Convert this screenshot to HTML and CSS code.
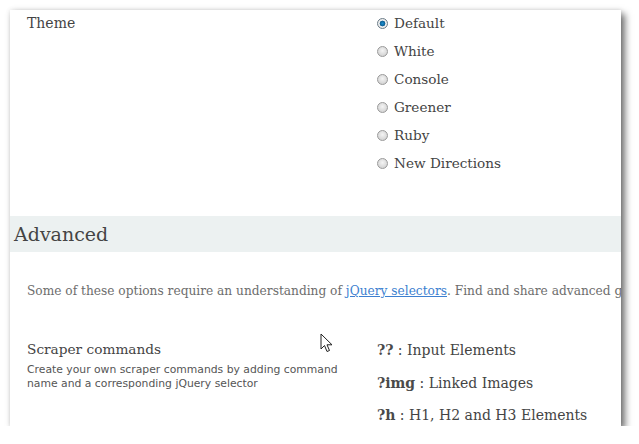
FILE: index.html
```html
<!DOCTYPE html>
<html>
<head>
<meta charset="utf-8">
<link rel="stylesheet" href="styles.css">
</head>
<body>
<div class="panel">
  <div class="row theme-row">
    <div class="label">Theme</div>
    <div class="options">
      <label class="opt"><span class="radio checked"></span>Default</label>
      <label class="opt"><span class="radio"></span>White</label>
      <label class="opt"><span class="radio"></span>Console</label>
      <label class="opt"><span class="radio"></span>Greener</label>
      <label class="opt"><span class="radio"></span>Ruby</label>
      <label class="opt"><span class="radio"></span>New Directions</label>
    </div>
  </div>
  <h2 class="band">Advanced</h2>
  <p class="intro">Some of these options require an understanding of <a href="#">jQuery selectors</a>. Find and share advanced global commands</p>
  <div class="row cmd-row">
    <div class="label">
      <div class="title">Scraper commands</div>
      <div class="desc">Create your own scraper commands by adding command name and a corresponding jQuery selector</div>
    </div>
    <div class="cmds">
      <div class="cmd"><b>??</b> : Input Elements</div>
      <div class="cmd"><b>?img</b> : Linked Images</div>
      <div class="cmd"><b>?h</b> : H1, H2 and H3 Elements</div>
    </div>
  </div>
  <svg class="cursor" width="14" height="20" viewBox="0 0 14 20"><path d="M1 1 L1 16 L4.5 12.5 L7 18.5 L9.5 17.5 L7 11.8 L12 11.8 Z" fill="#fff" stroke="#222" stroke-width="1" stroke-linejoin="miter"/></svg>
</div>
</body>
</html>
```
FILE: styles.css
```css
html, body {
  margin: 0;
  padding: 0;
  background: #fff;
}
body {
  font-family: "DejaVu Serif", Georgia, serif;
  color: #4a4a4a;
}
.panel {
  position: relative;
  margin: 10px 0 0 10px;
  width: 611px;
  height: 416px;
  overflow: hidden;
  background: #fff;
  box-shadow: 4px 4px 7px rgba(0,0,0,0.55), 0 0 5px rgba(0,0,0,0.12);
}
.row {
  display: grid;
  grid-template-columns: 367px 1fr;
}
.theme-row {
  margin-top: -1px;
}
.label {
  padding-left: 17px;
}
.theme-row .label {
  font-size: 14px;
  line-height: 28px;
  color: #444;
}
.options {
  display: flex;
  flex-direction: column;
}
.opt {
  display: flex;
  align-items: center;
  height: 28px;
  font-size: 13.6px;
  color: #444;
}
.radio {
  width: 11px;
  height: 11px;
  box-sizing: border-box;
  border-radius: 50%;
  border: 1px solid #9a9a9a;
  background: radial-gradient(circle at 50% 40%, #f4f4f4 0%, #d6d6d6 70%, #c4c4c4 100%);
  margin-right: 6px;
  position: relative;
  flex: none;
}
.radio.checked {
  border-color: #6b7c88;
  background: radial-gradient(circle at 50% 50%, #1a8fd0 0, #0d5e93 2.6px, #f2f2f2 3.2px, #dcdcdc 100%);
}
.band {
  margin: 39px 0 0 0;
  height: 36px;
  line-height: 36px;
  padding-left: 4px;
  font-weight: normal;
  font-size: 19px;
  color: #444;
  background: #ecf1f1;
}
.intro {
  margin: 29px 0 0 17px;
  font-size: 12.2px;
  line-height: 20px;
  color: #6d6d6d;
  white-space: nowrap;
}
.intro a {
  color: #3d7fd0;
}
.cmd-row {
  margin-top: 37px;
}
.title {
  font-size: 13.7px;
  line-height: 22px;
  color: #444;
}
.desc {
  margin-top: 3px;
  font-family: "DejaVu Sans", Verdana, sans-serif;
  font-size: 10.8px;
  line-height: 14px;
  color: #555;
  width: 322px;
}
.cmds {
  display: flex;
  flex-direction: column;
  margin-top: 1px;
}
.cmd {
  font-size: 14px;
  line-height: 22px;
  height: 32.5px;
  color: #444;
  white-space: nowrap;
}
.cmd b {
  color: #4a4a4a;
}
.cursor {
  position: absolute;
  left: 310px;
  top: 323px;
}
```
